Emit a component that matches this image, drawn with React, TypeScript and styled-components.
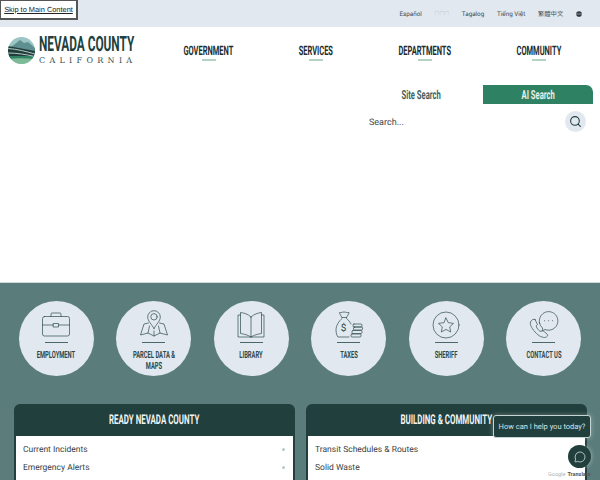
import React from 'react';
import styled, { createGlobalStyle } from 'styled-components';
import { MessageCircle, Search as SearchIcon } from 'lucide-react';

const GlobalStyle = createGlobalStyle`
  html, body {
    margin: 0;
    padding: 0;
    height: 480px;
    overflow: hidden;
    background: #fff;
    font-family: Roboto, 'Liberation Sans', sans-serif;
    text-rendering: geometricPrecision;
  }
`;

const Page = styled.div`
  position: relative;
  width: 600px;
  height: 480px;
  overflow: hidden;
`;

// no condensed face is installed, so the display type is Roboto Bold squeezed
const Squeezed = styled.span<{ $x?: number }>`
  display: block;
  flex-shrink: 0;
  font-weight: 700;
  white-space: nowrap;
  transform: scaleX(${p => p.$x ?? 0.575});
`;

const SkipLink = styled.a`
  position: absolute;
  top: 0;
  left: 0;
  width: 78px;
  height: 20px;
  box-sizing: border-box;
  display: flex;
  align-items: center;
  justify-content: center;
  background: #fff;
  border: 1px solid #555;
  border-width: 1px 2px 2px 1px;
  color: #222;
  font-family: 'Liberation Sans', sans-serif;
  font-size: 7.400px;
  text-decoration: underline;
  white-space: nowrap;
`;

const TopBar = styled.div`
  height: 27px;
  background: #e1e8f0;
  display: flex;
  align-items: center;
  justify-content: flex-end;
  gap: 12.800px;
  padding-right: 18px;
`;

const Lang = styled.span<{ $faint?: boolean }>`
  font-size: ${p => (p.$faint ? '4.800px' : '6.300px')};
  color: ${p => (p.$faint ? '#a6b0ba' : '#444b50')};
  font-family: Roboto, 'Noto Sans CJK TC', sans-serif;
  white-space: nowrap;
`;

const GlobeIcon = styled.svg`
  width: 6px;
  height: 6px;
`;

const Header = styled.header`
  display: flex;
  height: 50px;
  align-items: flex-start;
`;

const LogoBlock = styled.div`
  display: flex;
  align-items: flex-start;
  gap: 4px;
  margin: 10px 0 0 8px;
  width: 144px;
  flex-shrink: 0;
`;

const LogoMark = styled.svg`
  width: 27px;
  height: 27px;
  flex-shrink: 0;
`;

const LogoText = styled.div`
  display: flex;
  flex-direction: column;
  width: 96px;
`;

const LogoName = styled.div`
  display: flex;
  justify-content: center;
  font-size: 21px;
  line-height: 16px;
  color: #213f3c;
`;

const LogoState = styled.div`
  font-family: 'DejaVu Serif', serif;
  font-size: 8px;
  line-height: 11px;
  margin-top: 2px;
  letter-spacing: 4.300px;
  color: #33504e;
  white-space: nowrap;
`;

const Nav = styled.nav`
  display: flex;
  gap: 65px;
  margin: 18px 0 0 32px;
`;

const NavItem = styled.div<{ $w: number }>`
  width: ${p => p.$w}px;
  display: flex;
  flex-direction: column;
  align-items: center;
  font-size: 13px;
  line-height: 14px;
  color: #222b2b;

  &::after {
    content: '';
    width: 14px;
    height: 2px;
    background: #b3d3c3;
  }
`;

const SearchArea = styled.section`
  height: 205px;
  padding-left: 350px;
  padding-top: 8px;
  box-sizing: border-box;
  width: 593px;
`;

const Tabs = styled.div`
  display: flex;
  height: 19px;
`;

const Tab = styled.div<{ $active?: boolean }>`
  flex: ${p => (p.$active ? '0 0 110px' : '1')};
  display: flex;
  align-items: center;
  justify-content: center;
  padding: ${p => (p.$active ? '1px 0 0' : '1px 0 0 9px')};
  font-size: 12.500px;
  color: ${p => (p.$active ? '#e7f1ec' : '#44605e')};
  background: ${p => (p.$active ? '#2e8163' : 'transparent')};
  border-top-right-radius: ${p => (p.$active ? '7px' : '0')};
`;

const SearchRow = styled.div`
  display: flex;
  align-items: center;
  justify-content: space-between;
  margin-top: 7px;
  padding: 0 7px 0 19px;
`;

const SearchLabel = styled.span`
  font-size: 9px;
  color: #3e4548;
  padding-top: 2.500px;
`;

const SearchButton = styled.div`
  width: 21px;
  height: 21px;
  border-radius: 50%;
  background: #e1e8f0;
  display: flex;
  align-items: center;
  justify-content: center;
  color: #213f3c;
`;

const Band = styled.main`
  height: 198px;
  background: #5a7d7c;
  border-top: 1px solid #cfdcdc;
  box-sizing: border-box;
  padding-top: 18px;
`;

const Circles = styled.div`
  display: flex;
  gap: 22.500px;
  padding-left: 18.500px;
`;

const Circle = styled.div`
  width: 75px;
  height: 75px;
  flex-shrink: 0;
  border-radius: 50%;
  background: #e1e8f0;
  display: flex;
  flex-direction: column;
  align-items: center;
  padding-top: 9px;
  box-sizing: border-box;
  color: #2e4a4a;
`;

const CircleIcon = styled.svg`
  width: 32px;
  height: 28px;
  fill: none;
  overflow: visible;
  stroke: #2e4a4a;
  stroke-width: 0.7;
  stroke-linejoin: round;
  stroke-linecap: round;
  flex-shrink: 0;
`;

const CircleRule = styled.div`
  width: 23px;
  height: 1px;
  background: #4a6867;
  margin-top: 4px;
  flex-shrink: 0;
`;

const CircleLabel = styled.div`
  flex-shrink: 0;
  width: 84px;
  font-weight: 700;
  font-size: 10px;
  line-height: 11px;
  margin-top: 6.500px;
  text-align: center;
  transform: scaleX(0.58);
`;

const Cards = styled.div`
  display: grid;
  grid-template-columns: 281px 281px;
  gap: 11px;
  padding-left: 13.500px;
  margin-top: 27.500px;
`;

const Card = styled.article`
  background: #213f3c;
  border-radius: 6px 6px 0 0;
  padding: 0 2px;
  height: 200px;
`;

const CardTitle = styled.h2`
  margin: 0;
  height: 32px;
  display: flex;
  align-items: center;
  justify-content: center;
  font-size: 13.500px;
  font-weight: 700;
  color: #f1f4f4;
`;

const CardList = styled.ul`
  list-style: none;
  margin: 0;
  padding: 5px 0 0;
  background: #fff;
  height: 160px;
`;

const CardItem = styled.li`
  height: 18px;
  display: flex;
  align-items: center;
  justify-content: space-between;
  padding: 0 8px 0 7.500px;
  font-size: 8.500px;
  color: #3a3f42;
`;

const Marker = styled.span`
  width: 3px;
  height: 3px;
  border-radius: 50%;
  background: #bcc9c9;
`;

const ChatBubble = styled.div`
  position: absolute;
  left: 493px;
  top: 415px;
  width: 98px;
  height: 23px;
  box-sizing: border-box;
  display: flex;
  align-items: center;
  justify-content: center;
  background: #213f3c;
  border: 1px solid #c5d3d3;
  border-radius: 3px;
  font-size: 7.500px;
  color: #d9e2e2;
  white-space: nowrap;
  box-shadow: 0 0 5px rgba(255, 255, 255, 0.35);
`;

const ChatButton = styled.div`
  position: absolute;
  left: 568px;
  top: 445px;
  width: 23px;
  height: 23px;
  border-radius: 50%;
  background: #213f3c;
  display: flex;
  align-items: center;
  justify-content: center;
  color: #e1e8f0;
  box-shadow: 0 0 4px rgba(255, 255, 255, 0.5);
`;

const Translate = styled.div`
  position: absolute;
  left: 548px;
  top: 472px;
  font-size: 5.500px;
  font-weight: 700;
  color: #555;
  white-space: nowrap;

  span {
    color: #a9b4b8;
    font-weight: 400;
    margin-right: 2px;
  }
`;

const BriefcaseIcon = () => (
  <CircleIcon viewBox="0 0 32 28">
    <rect x="2.500" y="6.500" width="27" height="19.500" rx="2" />
    <path d="M11 6.500V4a1 1 0 0 1 1-1h8a1 1 0 0 1 1 1v2.500" />
    <path d="M2.500 15h11M18.500 15h11" />
    <rect x="13.500" y="13.500" width="5" height="3.500" />
  </CircleIcon>
);

const MapPinIcon = () => (
  <CircleIcon viewBox="0 0 32 28">
    <path d="M16 18.500c-2.500-4.500-6.300-7.500-6.300-11.500a6.300 6.300 0 0 1 12.600 0c0 4-3.800 7-6.300 11.500z" />
    <circle cx="16" cy="6.800" r="3.200" />
    <path d="M10.500 13l-4.500 1-3.500 11 7.500-2 6 3 6-3 7.500 2-3.500-11-4.500-1" />
    <path d="M10 23l1.500-7M22 23l-1.500-7M16 26v-5" />
  </CircleIcon>
);

const BookIcon = () => (
  <CircleIcon viewBox="0 0 32 28">
    <g transform="translate(0 1)">
      <path d="M16 6C13 3 9 2 5.500 1.500v21C9 23 13 24 16 26c3-2 7-3 10.500-3.500v-21C23 2 19 3 16 6z" />
      <path d="M16 6v20" />
      <path d="M5.500 4H3v22h13M26.500 4H29v22H16" />
    </g>
  </CircleIcon>
);

const MoneyIcon = () => (
  <CircleIcon viewBox="0 0 32 28">
    <path d="M9 7.500C8 5.500 6.500 4 6.500 2.500c2 .5 2.500-.5 4.500-.5s3 1 5 .5C16 4 14.500 5.500 13.500 7.500" />
    <path d="M9 7.500h4.500" />
    <path d="M9 8.500c-3 2.500-6 7-6 11.500 0 3 1 6 2 7h11" />
    <path d="M13.500 8.500c2 1.500 3.500 3.500 4.500 5.500" />
    <text x="7.800" y="21" fontSize="10" fill="#2e4a4a" stroke="none" fontFamily="Roboto, sans-serif">$</text>
    <rect x="20" y="14" width="9" height="3" rx="1" />
    <rect x="20.500" y="17" width="9" height="3" rx="1" />
    <rect x="19" y="20.500" width="10" height="3" rx="1" />
    <rect x="18" y="24" width="10" height="3" rx="1" />
  </CircleIcon>
);

const StarIcon = () => (
  <CircleIcon viewBox="0 0 32 28">
    <circle cx="16" cy="15" r="13" />
    <path d="M16 8l2.300 4.700 5.200.7-3.800 3.500 1 5.100-4.700-2.600-4.700 2.600 1-5.100-3.800-3.500 5.200-.7z" />
  </CircleIcon>
);

const PhoneIcon = () => (
  <CircleIcon viewBox="0 0 32 28">
    <path d="M11.500 13a9.300 9.300 0 1 1 5.500 6.500c-1 .8-2 1-3 1 .6-.8.8-1.500.5-2.500a9.300 9.300 0 0 1-3-5z" />
    <path d="M16.500 10.700h.2M20.500 10.700h.2M24.500 10.700h.2" />
    <path d="M7 9.500l2.500 5c-1.500 1-1.500 2-.5 3.500s2.500 3.500 4 3.500c1-.8 2-.8 3 0l3 2.500c1 1 .8 2-.5 3-2 1-6 .5-10-3.500S1.500 15 2.500 12c.8-2 3-3.500 4.500-2.500z" />
  </CircleIcon>
);

const navItems = [
  { label: 'GOVERNMENT', width: 49 },
  { label: 'SERVICES', width: 36 },
  { label: 'DEPARTMENTS', width: 52 },
  { label: 'COMMUNITY', width: 45 },
];

const services = [
  { label: 'EMPLOYMENT', icon: <BriefcaseIcon /> },
  { label: 'PARCEL DATA & MAPS', icon: <MapPinIcon /> },
  { label: 'LIBRARY', icon: <BookIcon /> },
  { label: 'TAXES', icon: <MoneyIcon /> },
  { label: 'SHERIFF', icon: <StarIcon /> },
  { label: 'CONTACT US', icon: <PhoneIcon /> },
];

const App = () => {
  return (
    <Page>
      <GlobalStyle />
      <SkipLink href="#main">Skip to Main Content</SkipLink>

      <TopBar>
        <Lang>Español</Lang>
        <Lang $faint>□□□</Lang>
        <Lang>Tagalog</Lang>
        <Lang>Tiếng Việt</Lang>
        <Lang>繁體中文</Lang>
        <GlobeIcon viewBox="0 0 7 7">
          <circle cx="3.500" cy="3.500" r="3.300" fill="#2f3a3c" />
          <path d="M0.200 3.500h6.600" stroke="#e1e8f0" strokeWidth="0.6" />
        </GlobeIcon>
      </TopBar>

      <Header>
        <LogoBlock>
          <LogoMark viewBox="0 0 27 27">
            <defs>
              <clipPath id="logo-clip">
                <circle cx="13.500" cy="13.500" r="13.500" />
              </clipPath>
            </defs>
            <g clipPath="url(#logo-clip)">
              <rect width="27" height="27" fill="#9cc5c5" />
              <path d="M0 12l7-5 5-4 4 3 4-1 7 6v4H0z" fill="#5f8f90" />
              <path d="M0 9l27 5v6H0z" fill="#1f3f3a" />
              <path d="M0 11.500c9 .5 18 3 27 5.500" stroke="#e1e8f0" strokeWidth="0.8" fill="none" />
              <rect y="19" width="27" height="3" fill="#2e8163" />
              <path d="M0 22c8-1 18-1 27 0v5H0z" fill="#7dbb98" />
              <path d="M0 16c9 0 18 1.500 27 3.500" stroke="#e1e8f0" strokeWidth="0.8" fill="none" />
            </g>
          </LogoMark>
          <LogoText>
            <LogoName><Squeezed $x={0.563}>NEVADA COUNTY</Squeezed></LogoName>
            <LogoState>CALIFORNIA</LogoState>
          </LogoText>
        </LogoBlock>
        <Nav>
          {navItems.map(item => (
            <NavItem key={item.label} $w={item.width}>
              <Squeezed>{item.label}</Squeezed>
            </NavItem>
          ))}
        </Nav>
      </Header>

      <SearchArea>
        <Tabs>
          <Tab><Squeezed $x={0.61}>Site Search</Squeezed></Tab>
          <Tab $active><Squeezed $x={0.61}>AI Search</Squeezed></Tab>
        </Tabs>
        <SearchRow>
          <SearchLabel>Search...</SearchLabel>
          <SearchButton>
            <SearchIcon size={13} strokeWidth={2} />
          </SearchButton>
        </SearchRow>
      </SearchArea>

      <Band id="main">
        <Circles>
          {services.map(s => (
            <Circle key={s.label}>
              {s.icon}
              <CircleRule />
              <CircleLabel>{s.label}</CircleLabel>
            </Circle>
          ))}
        </Circles>
        <Cards>
          <Card>
            <CardTitle><Squeezed $x={0.585}>READY NEVADA COUNTY</Squeezed></CardTitle>
            <CardList>
              <CardItem>Current Incidents<Marker /></CardItem>
              <CardItem>Emergency Alerts<Marker /></CardItem>
            </CardList>
          </Card>
          <Card>
            <CardTitle><Squeezed $x={0.585}>BUILDING &amp; COMMUNITY</Squeezed></CardTitle>
            <CardList>
              <CardItem>Transit Schedules &amp; Routes</CardItem>
              <CardItem>Solid Waste</CardItem>
            </CardList>
          </Card>
        </Cards>
      </Band>

      <ChatBubble>How can I help you today?</ChatBubble>
      <ChatButton>
        <MessageCircle size={12} strokeWidth={1.500} />
      </ChatButton>
      <Translate><span>Google</span>Translate</Translate>
    </Page>
  );
};

export default App;
